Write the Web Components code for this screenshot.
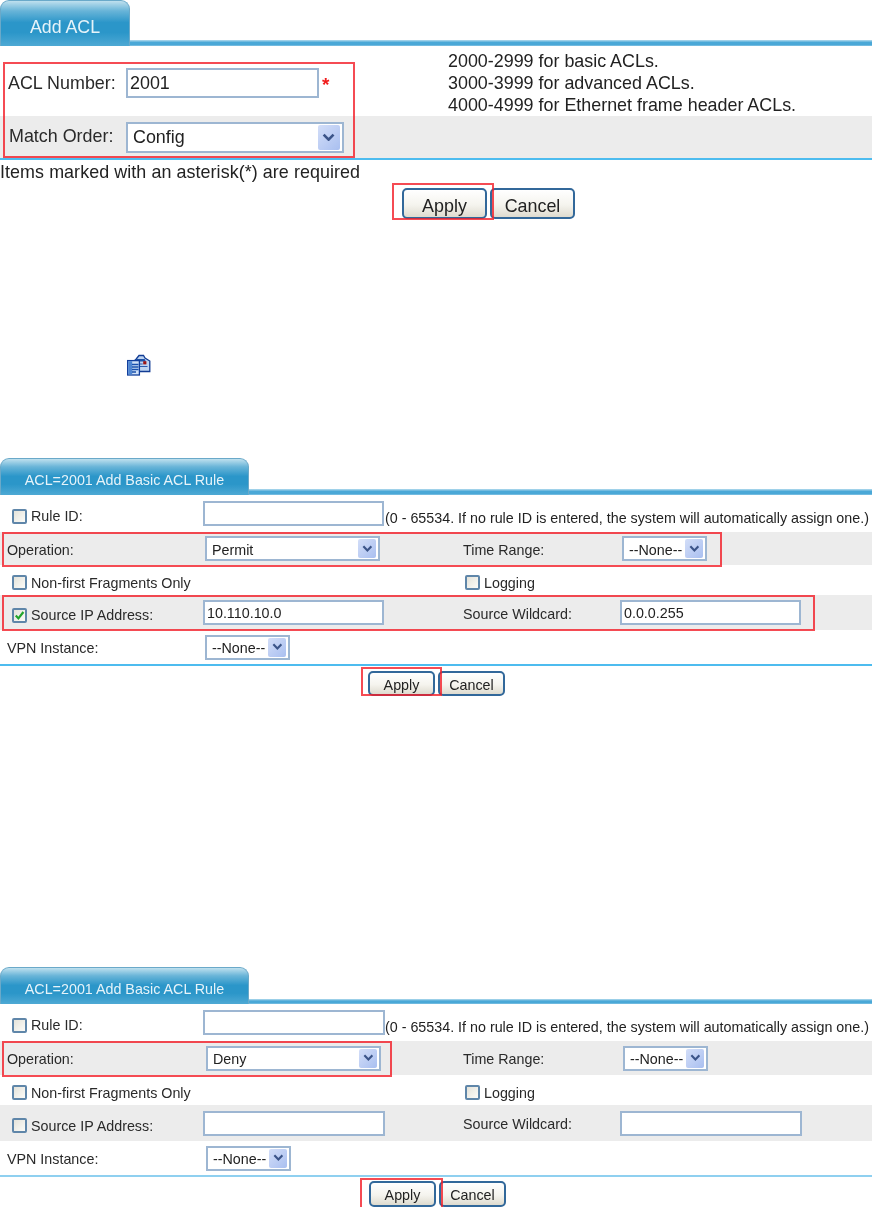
<!DOCTYPE html>
<html>
<head>
<meta charset="utf-8">
<title>Add ACL</title>
<style>
  html, body { margin: 0; padding: 0; background: #fff; }
  body { font-family: "Liberation Sans", Arial, sans-serif; color: #222; overflow: hidden; height: 1207px; }
</style>
</head>
<body>

<acl-panel title="Add ACL" style="--fs:17.9px;--tab-w:130px;--tab-h:46px;--tab-fs:17.8px;--tab-pad:8px;--bar:6px;--lp:0px;--ip:0px;--bp:6px">
  <acl-row style="--cols:126px 193px 129px 1fr;--h:70px;--pad:4px">
    <acl-label style="--lx:8px">ACL Number:</acl-label>
    <acl-input value="2001" style="--w:193px;--ih:30px"></acl-input>
    <acl-star></acl-star>
    <acl-hint>2000-2999 for basic ACLs.<br>3000-3999 for advanced ACLs.<br>4000-4999 for Ethernet frame header ACLs.</acl-hint>
  </acl-row>
  <acl-row shade style="--cols:126px 1fr;--h:42px">
    <acl-label style="--lx:9px;margin-top:-2px">Match Order:</acl-label>
    <acl-select value="Config" style="--w:218px;--ih:31px;--arrow:22px"></acl-select>
  </acl-row>
  <acl-rule style="--t:2px"></acl-rule>
  <acl-note>Items marked with an asterisk(*) are required</acl-note>
  <acl-actions style="--left:402px;--top:7px;--bw:85px;--bh:31px;--gap:3px">
    <acl-button>Apply</acl-button>
    <acl-button>Cancel</acl-button>
  </acl-actions>
  <red-mark style="left:3px;top:62px;width:352px;height:96px"></red-mark>
  <red-mark style="left:392px;top:183px;width:102px;height:37px"></red-mark>
</acl-panel>

<acl-icon></acl-icon>

<acl-panel title="ACL=2001 Add Basic ACL Rule" style="--fs:14.3px;--tab-w:249px;--tab-h:37px;--tab-fs:14.3px;--tab-pad:5px;--bar:6px">
  <acl-row style="--cols:203px 182px 1fr;--h:37px">
    <acl-check>Rule ID:</acl-check>
    <acl-input style="--w:181px;--ih:25px"></acl-input>
    <acl-text>(0 - 65534. If no rule ID is entered, the system will automatically assign one.)</acl-text>
  </acl-row>
  <acl-row shade style="--h:33px">
    <acl-label>Operation:</acl-label>
    <acl-select value="Permit" style="--w:175px;--ih:25px;--ml:2px"></acl-select>
    <acl-label class="far">Time Range:</acl-label>
    <acl-select value="--None--" style="--w:85px;--ih:25px;--ml:2px"></acl-select>
  </acl-row>
  <acl-row style="--h:30px">
    <acl-check>Non-first Fragments Only</acl-check>
    <span></span>
    <acl-check class="far">Logging</acl-check>
    <span></span>
  </acl-row>
  <acl-row shade style="--h:35px">
    <acl-check checked>Source IP Address:</acl-check>
    <acl-input value="10.110.10.0" style="--w:181px;--ih:25px"></acl-input>
    <acl-label class="far">Source Wildcard:</acl-label>
    <acl-input value="0.0.0.255" style="--w:181px;--ih:25px"></acl-input>
  </acl-row>
  <acl-row style="--h:34px">
    <acl-label>VPN Instance:</acl-label>
    <acl-select value="--None--" style="--w:85px;--ih:25px;--ml:2px"></acl-select>
  </acl-row>
  <acl-rule style="--t:2px"></acl-rule>
  <acl-actions style="--left:368px;--top:5px;--bw:67px;--bh:25px;--gap:3px">
    <acl-button>Apply</acl-button>
    <acl-button>Cancel</acl-button>
  </acl-actions>
  <red-mark style="left:2px;top:74px;width:720px;height:35px"></red-mark>
  <red-mark style="left:2px;top:137px;width:813px;height:36px"></red-mark>
  <red-mark style="left:361px;top:209px;width:81px;height:29px"></red-mark>
</acl-panel>

<acl-panel class="last" title="ACL=2001 Add Basic ACL Rule" style="--fs:14.3px;--tab-w:249px;--tab-h:37px;--tab-fs:14.3px;--tab-pad:5px;--bar:5px">
  <acl-row style="--cols:203px 182px 1fr;--h:37px">
    <acl-check>Rule ID:</acl-check>
    <acl-input style="--w:182px;--ih:25px"></acl-input>
    <acl-text>(0 - 65534. If no rule ID is entered, the system will automatically assign one.)</acl-text>
  </acl-row>
  <acl-row shade style="--h:34px">
    <acl-label>Operation:</acl-label>
    <acl-select value="Deny" style="--w:175px;--ih:25px;--ml:3px"></acl-select>
    <acl-label class="far">Time Range:</acl-label>
    <acl-select value="--None--" style="--w:85px;--ih:25px;--ml:3px"></acl-select>
  </acl-row>
  <acl-row style="--h:30px">
    <acl-check>Non-first Fragments Only</acl-check>
    <span></span>
    <acl-check class="far">Logging</acl-check>
    <span></span>
  </acl-row>
  <acl-row shade style="--h:36px">
    <acl-check>Source IP Address:</acl-check>
    <acl-input style="--w:182px;--ih:25px"></acl-input>
    <acl-label class="far">Source Wildcard:</acl-label>
    <acl-input style="--w:182px;--ih:25px"></acl-input>
  </acl-row>
  <acl-row style="--h:34px">
    <acl-label>VPN Instance:</acl-label>
    <acl-select value="--None--" style="--w:85px;--ih:25px;--ml:3px"></acl-select>
  </acl-row>
  <acl-rule style="--t:2px;--c:#8fd0f0"></acl-rule>
  <acl-actions style="--left:369px;--top:4px;--bw:67px;--bh:26px;--gap:3px">
    <acl-button>Apply</acl-button>
    <acl-button>Cancel</acl-button>
  </acl-actions>
  <red-mark style="left:2px;top:74px;width:390px;height:36px"></red-mark>
  <red-mark style="left:360px;top:211px;width:83px;height:31px"></red-mark>
</acl-panel>

<script>
// small helper so every element below is only a class name, a style and some markup
function simple(name, css, html) {
  customElements.define(name, class extends HTMLElement {
    constructor() {
      super();
      this.attachShadow({ mode: "open" });
      this.shadowRoot.innerHTML = `<style>${css}</style>${html}`;
    }
  });
}

class AclPanel extends HTMLElement {
  constructor() {
    super();
    this.attachShadow({ mode: "open" });
  }
  connectedCallback() {
    const last = this.classList.contains("last");
    this.shadowRoot.innerHTML = `
      <style>
        :host { display: block; position: relative; font-size: var(--fs); margin-top: ${last ? "271px" : "0"}; filter: blur(.3px); }
        .head { display: flex; align-items: flex-end; height: var(--tab-h); }
        .tab {
          width: var(--tab-w); height: 100%; box-sizing: border-box; flex: none;
          display: flex; align-items: center; justify-content: center;
          color: #e6f3f9; font-size: var(--tab-fs); padding-top: var(--tab-pad);
          border: 1px solid #6aa9c9; border-bottom: 0; border-radius: 9px 9px 0 0;
          background: linear-gradient(#bfe0ee 0, #68b4d8 22%, #2b96c9 48%, #2b96c9 70%, #4ea9d4 100%);
        }
        .bar {
          flex: 1; height: var(--bar);
          background: linear-gradient(#b6dcee, #4aa8d7 40%, #4aa8d7 75%, #86c4e4);
        }
      </style>
      <div class="head"><div class="tab">${this.getAttribute("title")}</div><div class="bar"></div></div>
      <slot></slot>`;
    this.removeAttribute("title");
  }
}
customElements.define("acl-panel", AclPanel);

simple("acl-row", `
  :host {
    display: grid; grid-template-columns: var(--cols, 203px 260px 157px 1fr);
    align-items: center; height: var(--h); box-sizing: border-box;
    padding-top: var(--pad, 0); background: #fff;
  }
  :host([shade]) { background: #ececec; }
`, `<slot></slot>`);

simple("acl-label", `
  :host { display: block; padding: var(--lp, 2px) 0 0 var(--lx, 7px); white-space: nowrap; color: #2a2a2a; }
  :host(.far) { padding-left: 0; }
`, `<slot></slot>`);

simple("acl-text", `:host { display: block; padding-top: 9px; white-space: nowrap; color: #222; }`, `<slot></slot>`);

simple("acl-hint", `:host { display: block; white-space: nowrap; line-height: 22px; color: #222; }`, `<slot></slot>`);

simple("acl-star", `:host { display: block; color: #f01c1c; padding: 2px 0 0 3px; font-size: 19px; font-weight: bold; line-height: 1; }`, `*`);

simple("acl-note", `:host { display: block; height: 21px; line-height: 24px; white-space: nowrap; color: #222; letter-spacing: .07px; }`, `<slot></slot>`);

simple("acl-rule", `:host { display: block; height: var(--t); background: var(--c, #4dbcef); }`, ``);

simple("acl-actions", `
  :host {
    display: flex; gap: var(--gap); padding-left: var(--left); padding-top: var(--top);
  }
`, `<slot></slot>`);

simple("acl-button", `
  :host {
    display: flex; align-items: center; justify-content: center; box-sizing: border-box;
    width: var(--bw); height: var(--bh); color: #222; padding-top: var(--bp, 2px);
    border: 2px solid #32689a; border-radius: 5px;
    background: linear-gradient(#fff, #f5f4ee 55%, #dedbcf);
  }
`, `<slot></slot>`);

simple("red-mark", `
  :host { display: block; position: absolute; box-sizing: border-box; border: 2px solid rgba(242, 30, 40, .8); pointer-events: none; }
`, ``);

class AclInput extends HTMLElement {
  constructor() {
    super();
    this.attachShadow({ mode: "open" });
  }
  connectedCallback() {
    this.shadowRoot.innerHTML = `
      <style>
        :host {
          display: flex; align-items: center; box-sizing: border-box;
          width: var(--w); height: var(--ih); padding: var(--ip, 1px) 0 0 2px;
          border: 2px solid #9db6d2; background: #fff; color: #222; white-space: nowrap;
        }
      </style>${this.getAttribute("value") || ""}`;
  }
}
customElements.define("acl-input", AclInput);

class AclSelect extends HTMLElement {
  constructor() {
    super();
    this.attachShadow({ mode: "open" });
  }
  connectedCallback() {
    this.shadowRoot.innerHTML = `
      <style>
        :host {
          display: flex; align-items: center; justify-content: space-between; box-sizing: border-box;
          width: var(--w); height: var(--ih); margin-left: var(--ml, 0); padding: 0 2px 0 5px;
          border: 2px solid #9db6d2; background: #fff; color: #222; white-space: nowrap;
        }
        .arrow {
          flex: none; width: var(--arrow, 18px); height: calc(var(--ih) - 6px); border-radius: 2px;
          display: flex; align-items: center; justify-content: center;
          background: linear-gradient(135deg, #d3def8, #a9bff0);
        }
        svg { width: 60%; }
        span { padding-top: var(--ip, 2px); }
      </style>
      <span>${this.getAttribute("value")}</span>
      <div class="arrow"><svg viewBox="0 0 12 8"><path d="M1.5 1.5 6 6l4.5-4.5" fill="none" stroke="#3b5488" stroke-width="2.4"/></svg></div>`;
  }
}
customElements.define("acl-select", AclSelect);

class AclCheck extends HTMLElement {
  constructor() {
    super();
    this.attachShadow({ mode: "open" });
  }
  connectedCallback() {
    const tick = this.hasAttribute("checked")
      ? `<svg viewBox="0 0 11 11"><path d="M1.8 5.5 4.4 8.4 9.4 2" fill="none" stroke="#22a52c" stroke-width="2.2"/></svg>`
      : "";
    this.shadowRoot.innerHTML = `
      <style>
        :host { display: flex; align-items: center; gap: 4px; padding: 5px 0 0 12px; white-space: nowrap; color: #2a2a2a; }
        :host(.far) { padding-left: 2px; }
        .box {
          flex: none; width: 15px; height: 15px; box-sizing: border-box; border: 2px solid #5f86a9;
          border-radius: 2px; background: linear-gradient(135deg, #e4e3da, #fbfbf8); display: flex;
        }
        svg { width: 100%; }
      </style>
      <div class="box">${tick}</div><span><slot></slot></span>`;
  }
}
customElements.define("acl-check", AclCheck);

simple("acl-icon", `
  :host { display: block; width: 24px; height: 24px; margin: 135px 0 80px 127px; }
  svg { display: block; width: 24px; height: 24px; }
`, `<svg viewBox="0 0 24 24">
  <path d="M5.5 8.5 9 5.2 12 1.5h4.5l1.5 2.5 4.8 3v10.5H5.5z" fill="#bcd3f0" stroke="#123c94" stroke-width="1.3"/>
  <path d="M9 5h8.6l1.4 2.4H7.4z" fill="#1f52a8"/>
  <rect x="16.2" y="7.2" width="3.2" height="3.2" fill="#9c1414"/>
  <path d="M12.5 10h3.2M12.5 12.5h8" stroke="#2a5cb0" stroke-width="1.2"/>
  <rect x=".6" y="6.6" width="11.8" height="14.4" fill="#cfe1f7" stroke="#123f9c" stroke-width="1.3"/>
  <rect x="1.2" y="7.2" width="4" height="13.2" fill="#4f86d2"/>
  <path d="M5 10.5h6.5M5 13h6.5M5 15.5h6.5M5 18h4" stroke="#1a50ac" stroke-width="1.3"/>
</svg>`);
</script>
</body>
</html>
